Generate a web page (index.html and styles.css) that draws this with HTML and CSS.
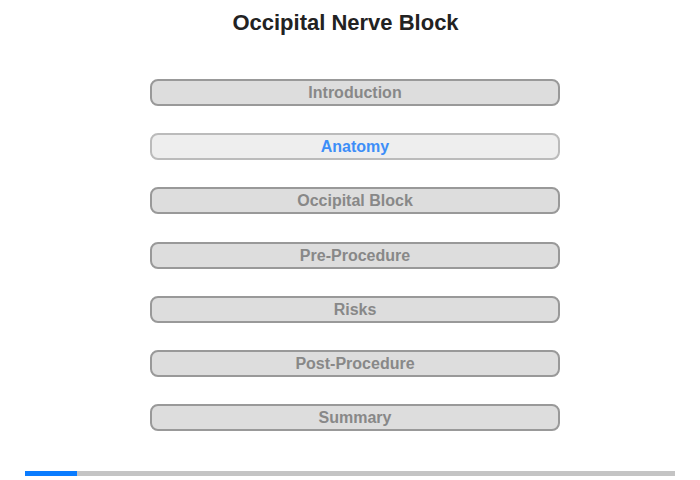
FILE: index.html
```html
<!DOCTYPE html>
<html>
<head>
<meta charset="utf-8">
<link rel="stylesheet" href="styles.css">
</head>
<body>
<div class="page">
  <h1 class="title">Occipital Nerve Block</h1>
  <nav class="menu">
    <div class="item">Introduction</div>
    <div class="item active">Anatomy</div>
    <div class="item">Occipital Block</div>
    <div class="item">Pre-Procedure</div>
    <div class="item">Risks</div>
    <div class="item">Post-Procedure</div>
    <div class="item">Summary</div>
  </nav>
  <div class="progress"><div class="bar" style="width:8%"></div></div>
</div>
</body>
</html>
```
FILE: styles.css
```css
html, body {
  margin: 0;
  padding: 0;
  background: #fff;
  font-family: "Liberation Sans", Arial, sans-serif;
}
.page {
  width: 700px;
  height: 480px;
  display: flex;
  flex-direction: column;
  align-items: center;
}
.title {
  margin: 10px 0 0 -9px;
  font-size: 22px;
  line-height: 26px;
  font-weight: bold;
  color: #222;
}
.menu {
  margin: 43px 0 0 10px;
  display: flex;
  flex-direction: column;
  gap: 27.2px;
}
.item {
  box-sizing: border-box;
  width: 410px;
  height: 27px;
  border: 2px solid #999;
  border-radius: 8px;
  background: #ddd;
  color: #888;
  font-size: 16px;
  font-weight: bold;
  line-height: 23px;
  text-align: center;
}
.item.active {
  background: #eee;
  border-color: #bbb;
  color: #3d8ef8;
}
.progress {
  margin-top: 40px;
  width: 650px;
  height: 5px;
  background: #c4c4c4;
}
.bar {
  height: 100%;
  background: #0a7cff;
}
```
